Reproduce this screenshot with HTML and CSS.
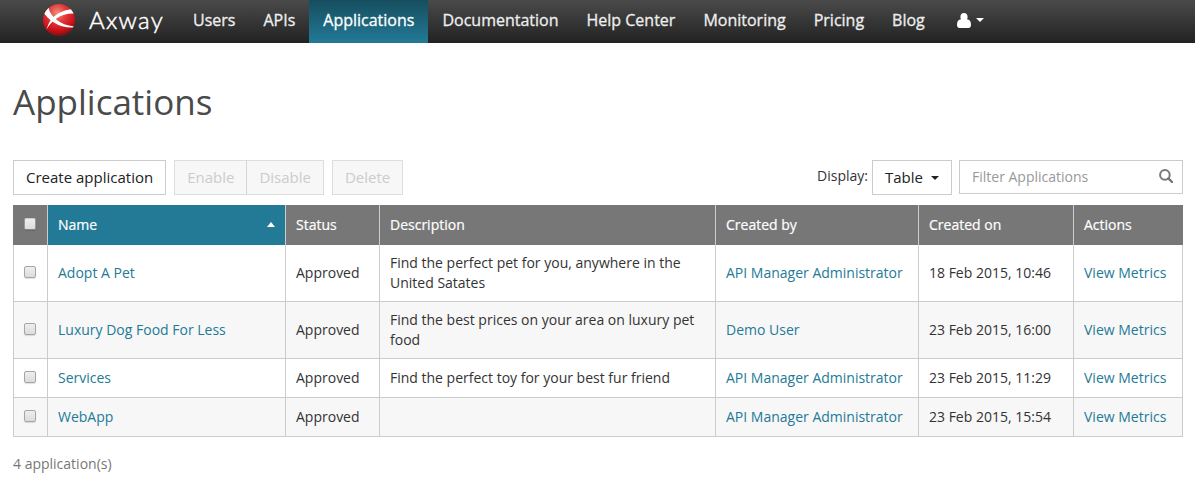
FILE: index.html
```html
<!DOCTYPE html>
<html lang="en">
<head>
<meta charset="utf-8">
<title>Applications</title>
<link rel="stylesheet" href="styles.css">
</head>
<body>
<header class="navbar">
  <a class="brand">
    <svg class="brand-mark" width="34" height="34" viewBox="0 0 34 34">
      <defs>
        <radialGradient id="ball" cx="45%" cy="28%" r="72%">
          <stop offset="0" stop-color="#f0907c"/>
          <stop offset=".4" stop-color="#e2383a"/>
          <stop offset=".75" stop-color="#cf1119"/>
          <stop offset="1" stop-color="#7c1014"/>
        </radialGradient>
        <clipPath id="disc"><circle cx="17" cy="17" r="16"/></clipPath>
      </defs>
      <circle cx="17" cy="17" r="16" fill="url(#ball)"/>
      <g clip-path="url(#disc)" fill="#fff">
        <path d="M2 10 L6.500 4.500 Q7.500 11 15 17 Q21 22 32 23.500 L31.500 24.500 Q20 25 12 19.500 Q5 15 2 10Z"/>
        <path d="M4.500 26.500 Q7.500 15 17 10 Q24 6.500 30 6 L33 10.500 Q22 10 14.500 15.500 Q8 20 4.500 26.500Z"/>
      </g>
    </svg>
    <span class="brand-name">Axway</span>
  </a>
  <nav class="nav">
    <a class="nav-item">Users</a>
    <a class="nav-item">APIs</a>
    <a class="nav-item active">Applications</a>
    <a class="nav-item">Documentation</a>
    <a class="nav-item">Help Center</a>
    <a class="nav-item">Monitoring</a>
    <a class="nav-item">Pricing</a>
    <a class="nav-item">Blog</a>
    <a class="nav-item user">
      <svg width="14" height="15" viewBox="0 0 14 15"><path fill="#fff" d="M7 0c2.200 0 3.600 1.600 3.600 3.900 0 .9-.2 1.700-.6 2.400C12.600 6.500 14 8.600 14 11.700 14 13.800 12.900 15 11.400 15H2.600C1.100 15 0 13.800 0 11.700 0 8.600 1.400 6.500 4 6.300c-.4-.7-.6-1.500-.6-2.400C3.400 1.600 4.800 0 7 0z"/></svg>
      <span class="caret"></span>
    </a>
  </nav>
</header>
<main class="page">
  <h1 class="title">Applications</h1>
  <div class="toolbar">
    <button class="btn">Create application</button>
    <div class="btn-group">
      <button class="btn" disabled>Enable</button>
      <button class="btn" disabled>Disable</button>
    </div>
    <button class="btn" disabled>Delete</button>
    <span class="display-label">Display:</span>
    <button class="btn display-select">Table<span class="caret"></span></button>
    <div class="filter">
      <input class="filter-input" type="text" placeholder="Filter Applications">
      <svg width="14" height="14" viewBox="0 0 14 14" fill="none" stroke="#777"><circle cx="5.900" cy="5.900" r="4.800" stroke-width="2"/><path d="M9.400 9.400l3.600 3.600" stroke-width="2.400" stroke-linecap="round"/></svg>
    </div>
  </div>
  <table class="grid">
    <colgroup><col class="c-check"><col class="c-name"><col class="c-status"><col class="c-desc"><col class="c-by"><col class="c-on"><col class="c-act"></colgroup>
    <thead>
      <tr>
        <th><span class="check head"></span></th>
        <th class="sorted"><div class="sort">Name<span class="caret up"></span></div></th>
        <th>Status</th><th>Description</th><th>Created by</th><th>Created on</th><th>Actions</th>
      </tr>
    </thead>
    <tbody>
      <tr><td><span class="check"></span></td><td><a>Adopt A Pet</a></td><td>Approved</td><td>Find the perfect pet for you, anywhere in the United Satates</td><td><a>API Manager Administrator</a></td><td>18 Feb 2015, 10:46</td><td><a>View Metrics</a></td></tr>
      <tr><td><span class="check"></span></td><td><a>Luxury Dog Food For Less</a></td><td>Approved</td><td>Find the best prices on your area on luxury pet food</td><td><a>Demo User</a></td><td>23 Feb 2015, 16:00</td><td><a>View Metrics</a></td></tr>
      <tr><td><span class="check"></span></td><td><a>Services</a></td><td>Approved</td><td>Find the perfect toy for your best fur friend</td><td><a>API Manager Administrator</a></td><td>23 Feb 2015, 11:29</td><td><a>View Metrics</a></td></tr>
      <tr><td><span class="check"></span></td><td><a>WebApp</a></td><td>Approved</td><td></td><td><a>API Manager Administrator</a></td><td>23 Feb 2015, 15:54</td><td><a>View Metrics</a></td></tr>
    </tbody>
  </table>
  <p class="count">4 application(s)</p>
</main>
</body>
</html>
```

FILE: styles.css
```css
* { box-sizing: border-box; }
body {
  margin: 0;
  background: #fff;
  color: #333;
  font: 14px/20px "Open Sans", sans-serif;
  overflow: hidden;
}
.navbar {
  display: flex;
  height: 43px;
  padding-left: 42px;
  background: linear-gradient(#4a4a4a, #222);
}
.brand { display: flex; align-items: center; width: 137px; height: 40px; gap: 13px; }
.brand-mark { flex: none; }
.brand-name {
  color: #fff;
  font: 300 24px/30px Lato, sans-serif;
  letter-spacing: 1.3px;
  -webkit-text-stroke: .5px #fff;
}
.nav { display: flex; }
.nav-item {
  padding: 10px 14px 13px;
  color: #eee;
  font-size: 16px;
  font-weight: 400;
  line-height: 20px;
  white-space: nowrap;
  -webkit-text-stroke: .3px currentColor;
}
.nav-item.active { color: #fff; background: linear-gradient(#164e5f, #237a96); }
.nav-item.user { display: flex; align-items: center; gap: 5px; padding-left: 18px; color: #fff; }
.caret {
  border: 4px solid transparent;
  border-top-color: currentColor;
  border-bottom: 0;
}
.caret.up { margin-bottom: 1px; border-top: 0; border-bottom: 5px solid #fff; }
.page { padding: 0 12px 0 13px; }
.title {
  margin: 36px 0;
  color: #4a4a4a;
  font-size: 35px;
  font-weight: 400;
  line-height: 45px;
}
.toolbar { display: flex; height: 35px; }
.btn {
  height: 35px;
  padding: 0 12px;
  border: 1px solid #ccc;
  background: #fff;
  color: #222;
  font: 15px/33px "Open Sans", sans-serif;
  white-space: nowrap;
}
.btn:disabled { border-color: #ddd; background: #f7f7f7; color: #ccc; }
.btn-group { display: flex; margin: 0 8px; }
.btn-group .btn + .btn { margin-left: -1px; border-left-color: #d4d4d4; }
.display-label { margin: 6px 4px 0 auto; }
.display-select { display: flex; align-items: center; gap: 8px; width: 80px; }
.filter {
  display: flex;
  align-items: center;
  width: 224px;
  height: 34px;
  margin-left: 7px;
  padding: 0 9px 2px 12px;
  border: 1px solid #ccc;
}
.filter-input {
  flex: 1;
  min-width: 0;
  padding: 2px 0 0;
  border: 0;
  outline: 0;
  background: none;
  font: 14px/20px "Open Sans", sans-serif;
}
.filter-input::placeholder { color: #999; opacity: 1; }
.grid {
  width: 1170px;
  margin-top: 10px;
  border-spacing: 0;
  table-layout: fixed;
}
.c-check { width: 35px; }
.c-name { width: 238px; }
.c-status { width: 94px; }
.c-desc { width: 336px; }
.c-by { width: 203px; }
.c-on { width: 155px; }
.c-act { width: 109px; }
.grid th, .grid td { height: 39px; padding: 8px 10px; text-align: left; vertical-align: middle; }
.grid th {
  height: 40px;
  border-right: 1px solid #ccc;
  background: #777;
  color: #fff;
  font-weight: 400;
  -webkit-text-stroke: .2px #fff;
}
.grid th:last-child { border-right-color: #777; }
.grid th.sorted { background: #237a96; }
.grid td { border-right: 1px solid #ccc; border-bottom: 1px solid #ccc; }
.grid td:first-child { border-left: 1px solid #ccc; padding-left: 10px; }
.grid th:first-child { padding-left: 11px; }
.grid tbody tr:nth-child(even) { background: #f7f7f7; }
.grid a { color: #237a96; }
.sort { display: flex; align-items: center; justify-content: space-between; }
.check {
  display: block;
  width: 12px;
  height: 12px;
  margin-bottom: 2px;
  border: 1px solid #a6a6a6;
  border-radius: 2px;
  background: linear-gradient(#eee, #dcdcdc);
  box-shadow: 0 1px 1px rgba(0, 0, 0, .12);
}
.check.head { border-color: #c9c9c9 #999 #888; }
.count { margin: 17px 0 0; color: #777; }
```
